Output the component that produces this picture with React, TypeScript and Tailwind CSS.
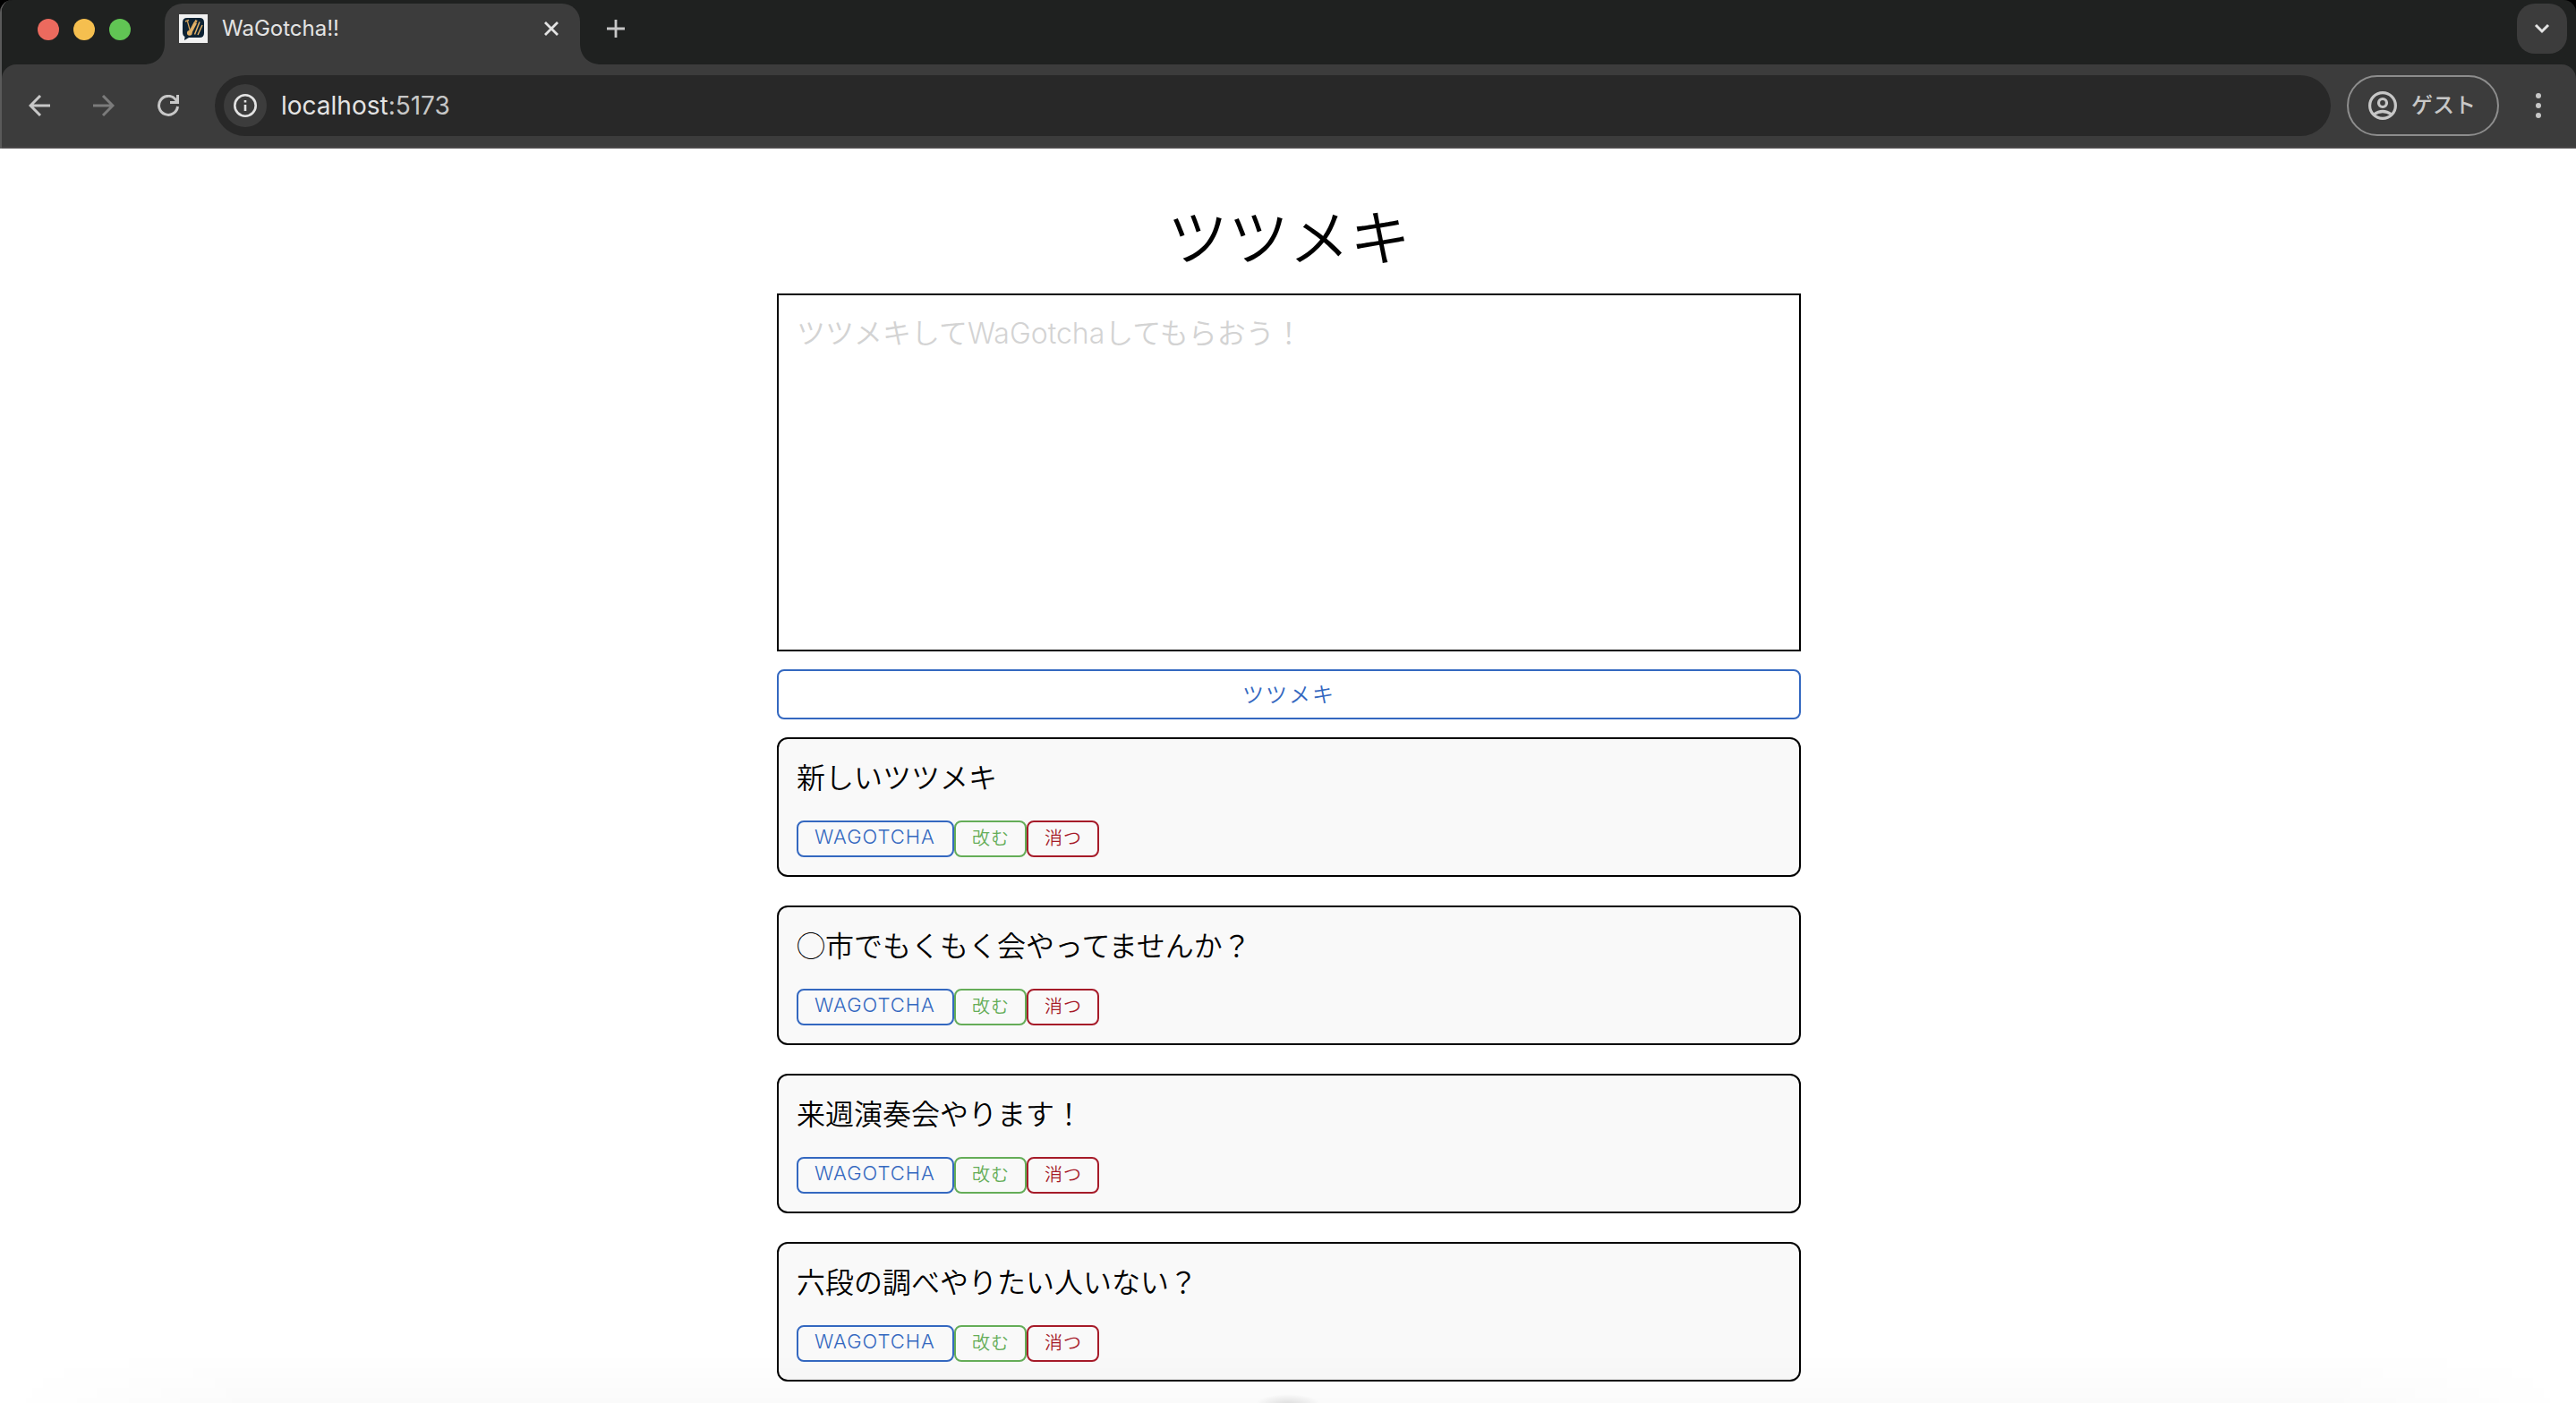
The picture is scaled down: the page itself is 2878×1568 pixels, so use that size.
import React from "react";

const posts = [
  "新しいツツメキ",
  "◯市でもくもく会やってませんか？",
  "来週演奏会やります！",
  "六段の調べやりたい人いない？",
];

function Favicon() {
  return (
    <svg viewBox="0 0 32 32" className="size-8 shrink-0" aria-hidden="true">
      <rect width="32" height="32" fill="#f1f1f1" />
      <path d="M9 4h14q5 0 5 5v12q0 5-5 5H11l-5 3 .500-4Q4 24 4 20V9q0-5 5-5z" fill="#0d2233" />
      <path d="M9.500 8l3 11" stroke="#d9a55a" strokeWidth="1.200" />
      <path d="M7 8l4-1.500" stroke="#d9a55a" strokeWidth="1.600" />
      <path d="M19.500 6.500l-1.500 3" stroke="#d9a55a" strokeWidth="2.600" />
      <circle cx="11.800" cy="20.800" r="2.900" fill="#e0b066" />
      <path d="M12.800 19.800l5.500-10.500" stroke="#e0b066" strokeWidth="3.600" />
      <path d="M17.500 22.500l5.500-14M21 23l5-11" stroke="#e0b066" strokeWidth="1.500" />
    </svg>
  );
}

function TabStrip() {
  return (
    <div className="flex h-[72px] items-start bg-[#1f2120] pr-[10px]">
      <div className="flex h-[66px] w-[158px] shrink-0 items-center gap-4 pl-10">
        <button aria-label="Close window" className="size-6 rounded-full bg-[#ec6a5e]" />
        <button aria-label="Minimize window" className="size-6 rounded-full bg-[#f5bf4f]" />
        <button aria-label="Zoom window" className="size-6 rounded-full bg-[#61c554]" />
      </div>
      <div className="flex h-full pt-1">
        <svg viewBox="0 0 24 68" className="h-[68px] w-6" aria-hidden="true">
          <path d="M0 68C16 68 24 58 24 44V68z" fill="#3c3c3c" />
        </svg>
        <div className="flex h-[68px] w-[464px] items-start rounded-t-[20px] bg-[#3c3c3c] px-4 pt-3">
          <Favicon />
          <span className="ml-4 flex-1 text-[24px] leading-8 text-[#e3e3e3]">WaGotcha!!</span>
          <button aria-label="Close tab" className="flex size-8 items-center justify-center">
            <svg viewBox="0 0 18 18" className="size-[18px]" aria-hidden="true">
              <path d="M2 2l14 14M16 2L2 16" stroke="#e3e3e3" strokeWidth="2.800" />
            </svg>
          </button>
        </div>
        <svg viewBox="0 0 24 68" className="h-[68px] w-6" aria-hidden="true">
          <path d="M24 68C8 68 0 58 0 44V68z" fill="#3c3c3c" />
        </svg>
      </div>
      <button aria-label="New tab" className="mt-4 flex size-8 items-center justify-center">
        <svg viewBox="0 0 20 20" className="size-5" aria-hidden="true">
          <path d="M10 0v20M0 10h20" stroke="#c7c7c7" strokeWidth="2.800" />
        </svg>
      </button>
      <button aria-label="Search tabs" className="mt-1 ml-auto flex size-14 items-center justify-center rounded-[20px] bg-[#3c3c3c]">
        <svg viewBox="0 0 18 12" className="h-3 w-[18px]" aria-hidden="true">
          <path d="M2 2l7 7 7-7" fill="none" stroke="#e3e3e3" strokeWidth="3" />
        </svg>
      </button>
    </div>
  );
}

function Toolbar() {
  return (
    <div className="bg-[#1f2120]">
      <div className="flex h-[94px] items-center rounded-t-[16px] border-b-2 border-[#4a4849] bg-[#3c3c3c] px-6">
        <button aria-label="Back" className="flex size-9 items-center justify-center">
          <svg viewBox="0 0 24 24" className="size-6" fill="none" stroke="#c7c7c7" strokeWidth="3" aria-hidden="true">
            <path d="M24 12H2M13 1L2 12l11 11" />
          </svg>
        </button>
        <button aria-label="Forward" disabled className="ml-9 flex size-9 items-center justify-center">
          <svg viewBox="0 0 24 24" className="size-6" fill="none" stroke="#7b7b7b" strokeWidth="3" aria-hidden="true">
            <path d="M0 12h22M11 1l11 11-11 11" />
          </svg>
        </button>
        <button aria-label="Reload" className="ml-9 flex size-9 items-center justify-center">
          <svg viewBox="0 0 24 24" className="size-6" fill="none" stroke="#c7c7c7" strokeWidth="3" aria-hidden="true">
            <path d="M22.500 13A10.500 10.500 0 1 1 20 5l2.500 3M22.500 0v8.500H14" />
          </svg>
        </button>
        <div className="ml-[34px] flex h-[68px] flex-1 items-center rounded-full bg-[#282828] pl-[10px]">
          <button aria-label="View site information" className="flex size-12 items-center justify-center rounded-full bg-[#3c3c3c]">
            <svg viewBox="0 0 26 26" className="size-[26px]" fill="none" stroke="#e3e3e3" strokeWidth="2.600" aria-hidden="true">
              <circle cx="13" cy="13" r="11.700" />
              <path d="M13 12v7M13 7v2.600" />
            </svg>
          </button>
          <a href="http://localhost:5173" className="ml-4 text-[28px] leading-9 text-[#e3e3e3]">
            localhost<span className="text-[#c7c7c7]">:5173</span>
          </a>
        </div>
        <button className="ml-[18px] flex h-[68px] w-[170px] items-center gap-4 rounded-full border-2 border-[#8d8d8d] pl-[22px] text-[24px] leading-8 font-medium text-[#c7c7c7]">
          <svg viewBox="0 0 32 32" className="size-8 shrink-0" fill="none" stroke="#c7c7c7" strokeWidth="3.200" aria-hidden="true">
            <circle cx="16" cy="16" r="14.400" />
            <circle cx="16" cy="13" r="4.500" />
            <path d="M6 26q10-7 20 0" />
          </svg>
          ゲスト
        </button>
        <button aria-label="Menu" className="ml-[26px] flex size-9 items-center justify-center">
          <svg viewBox="0 0 6 28" className="h-7 w-[6px]" fill="#c7c7c7" aria-hidden="true">
            <circle cx="3" cy="3" r="3" />
            <circle cx="3" cy="14" r="3" />
            <circle cx="3" cy="25" r="3" />
          </svg>
        </button>
      </div>
    </div>
  );
}

function Post({ text }: { text: string }) {
  return (
    <li className="rounded-xl border-2 border-black bg-[#f9f9f9] px-5 pt-4 pb-5">
      <p className="text-[32px] leading-[50px] text-black">{text}</p>
      <div className="mt-[25px] flex text-[20px] leading-[33px] tracking-[1px]">
        <button className="rounded-lg border-2 border-[#3468c0] pr-[19px] pb-1 pl-[18px] font-['Inter','Noto_Sans_CJK_JP',sans-serif] text-[22px] text-[#3468c0]">
          WAGOTCHA
        </button>
        <button className="rounded-lg border-2 border-[#65ad58] pr-[17px] pb-1 pl-[18px] text-[#65ad58]">改む</button>
        <button className="rounded-lg border-2 border-[#a61b29] pr-[17px] pb-1 pl-[18px] text-[#a61b29]">消つ</button>
      </div>
    </li>
  );
}

export default function App() {
  return (
    <div className="relative min-h-screen bg-white font-['Inter','Noto_Sans_CJK_JP',sans-serif]">
      <header className="bg-black">
        <div className="overflow-hidden rounded-t-[14px] border-l-2 border-[#5a5a5a]">
          <TabStrip />
          <Toolbar />
        </div>
      </header>
      <div className="pl-[2px]">
        <main className="mx-auto max-w-[1144px] pt-[54px] font-['Noto_Sans_CJK_JP',sans-serif] font-[350]">
          <h1 className="text-center text-[68px] leading-[84px] text-black">ツツメキ</h1>
          <form className="mt-6 flex flex-col gap-5">
            <textarea
              aria-label="ツツメキ"
              placeholder="ツツメキしてWaGotchaしてもらおう！"
              className="h-[400px] resize-none border-2 border-black px-5 pt-[18px] pb-5 font-['Inter','Noto_Sans_CJK_JP',sans-serif] text-[32px] leading-[50px] placeholder:text-[#d3d3d3] focus:outline-none"
            />
            <button
              type="button"
              className="h-14 rounded-lg border-2 border-[#3468c0] pb-[2px] text-[24px] leading-8 tracking-[2px] text-[#3468c0]"
            >
              ツツメキ
            </button>
          </form>
          <ul className="mt-5 flex flex-col gap-8">
            {posts.map((text) => (
              <Post key={text} text={text} />
            ))}
          </ul>
        </main>
      </div>
      <div className="pointer-events-none absolute inset-x-0 bottom-0 flex h-14 justify-center overflow-hidden bg-[linear-gradient(to_top,rgba(0,0,0,0.02),transparent)] [mask-image:linear-gradient(to_right,transparent,black_10%,black_90%,transparent)]">
        <div className="mt-[46px] h-6 w-[72px] shrink-0 bg-[radial-gradient(closest-side,rgba(0,0,0,0.12),transparent)]" />
      </div>
    </div>
  );
}
